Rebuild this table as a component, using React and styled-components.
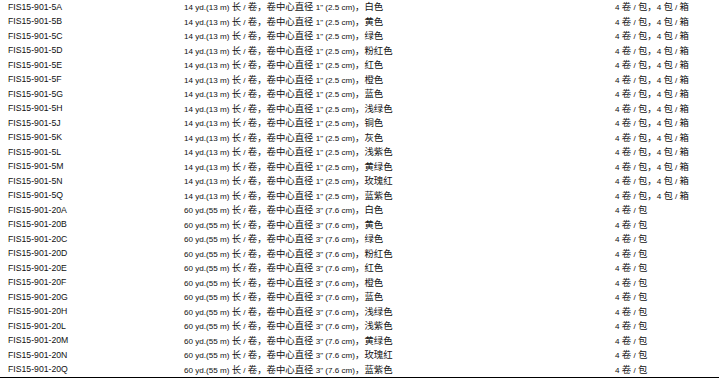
import styled, { createGlobalStyle } from "styled-components";

const GlobalStyle = createGlobalStyle`
  html, body {
    margin: 0;
    padding: 0;
    background: #fff;
  }
  body {
    font-family: "Liberation Sans", Arial, "Noto Sans CJK SC", sans-serif;
  }
`;

const colors14 = ["白色", "黄色", "绿色", "粉红色", "红色", "橙色", "蓝色", "浅绿色", "铜色", "灰色", "浅紫色", "黄绿色", "玫瑰红", "蓝紫色"];
const codes14 = ["5A", "5B", "5C", "5D", "5E", "5F", "5G", "5H", "5J", "5K", "5L", "5M", "5N", "5Q"];
const colors60 = ["白色", "黄色", "绿色", "粉红色", "红色", "橙色", "蓝色", "浅绿色", "浅紫色", "黄绿色", "玫瑰红", "蓝紫色"];
const codes60 = ["20A", "20B", "20C", "20D", "20E", "20F", "20G", "20H", "20L", "20M", "20N", "20Q"];

const rows = [
  ...codes14.map((c, i) => ({
    code: `FIS15-901-${c}`,
    desc: `14 yd.(13 m) 长 / 卷，卷中心直径 1" (2.5 cm)，${colors14[i]}`,
    pack: "4 卷 / 包，4 包 / 箱",
  })),
  ...codes60.map((c, i) => ({
    code: `FIS15-901-${c}`,
    desc: `60 yd.(55 m) 长 / 卷，卷中心直径 3" (7.6 cm)，${colors60[i]}`,
    pack: "4 卷 / 包",
  })),
];

// chinese runs come out bigger than the latin text in the original
function Mixed({ text }) {
  return text
    .split(/([\u3000-\u9fff\uff00-\uffef]+)/)
    .map((part, i) => (i % 2 ? <Han key={i}>{part}</Han> : part));
}

function App() {
  return (
    <>
      <GlobalStyle />
      <Table>
        {rows.map((r) => (
          <Row key={r.code}>
            <Code>{r.code}</Code>
            <Text><Mixed text={r.desc} /></Text>
            <Text><Mixed text={r.pack} /></Text>
          </Row>
        ))}
      </Table>
    </>
  );
}

export default App;

const Table = styled.div`
  width: 719px;
  height: 377px;
  display: grid;
  grid-template-rows: repeat(26, 1fr);
  border-bottom: 1px solid #000;
`;

const Row = styled.div`
  display: grid;
  grid-template-columns: 176px 431px 1fr;
  align-items: center;
  padding-left: 8px;
  box-sizing: border-box;
`;

const Code = styled.span`
  font-size: 8.7px;
  line-height: 1;
  color: #111;
  white-space: nowrap;
`;

const Text = styled.span`
  font-size: 8.1px;
  line-height: 1;
  color: #111;
  white-space: nowrap;
`;

const Han = styled.span`
  font-family: "Noto Sans CJK SC", sans-serif;
  font-size: 9.4px;
`;
